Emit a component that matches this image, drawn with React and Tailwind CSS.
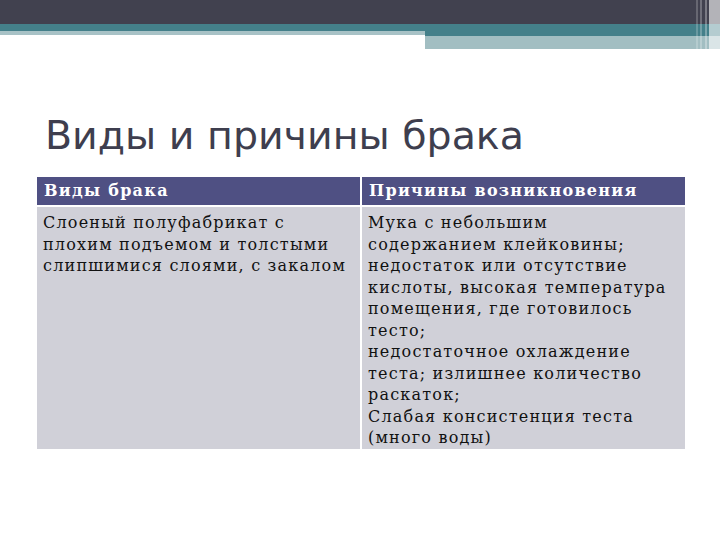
const causes = [
  "Мука с небольшим",
  "содержанием клейковины;",
  "недостаток или отсутствие",
  "кислоты, высокая температура",
  "помещения, где готовилось",
  "тесто;",
  "недостаточное охлаждение",
  "теста; излишнее количество",
  "раскаток;",
  "Слабая консистенция теста",
  "(много воды)",
];

const defects = [
  "Слоеный полуфабрикат с",
  "плохим подъемом и толстыми",
  "слипшимися слоями, с закалом",
];

export default function App() {
  return (
    <div className="relative w-[720px] h-[540px] bg-white overflow-hidden">
      {/* Top decoration */}
      <div className="flex flex-col">
        <div className="h-[24px] bg-[#41414f]" />
        <div className="flex">
          <div className="flex-1 flex flex-col">
            <div className="h-[7px] bg-[#44808a]" />
            <div className="h-[4px] bg-[#a8c2c6]" />
          </div>
          <div className="w-[295px] flex flex-col">
            <div className="h-[12px] bg-[#44808a]" />
            <div className="h-[13px] bg-[#a2bec2]" />
          </div>
        </div>
      </div>

      {/* right edge stripes */}
      <div className="absolute top-0 right-0 h-[49px] flex">
        <div className="w-[2px] bg-white/20" />
        <div className="w-[2px]" />
        <div className="w-[2px] bg-white/25" />
        <div className="w-[3px]" />
        <div className="w-[2px] bg-white/30" />
        <div className="w-[2px]" />
        <div className="w-[11px] bg-white/60" />
      </div>

      {/* Title */}
      <h1 className="mt-[62px] ml-[45px] text-[39.5px] leading-[48px] text-[#3e3e4e] font-['DejaVu_Sans',sans-serif]">
        Виды и причины брака
      </h1>

      {/* Table */}
      <div className="mt-[18px] ml-[37px] w-[648px] grid grid-cols-2 gap-[2px] bg-white font-['DejaVu_Serif',serif]">
        <div className="h-[28px] flex items-center px-[7px] bg-[#4f5083] text-white font-bold text-[16px] tracking-[1.3px]">
          Виды брака
        </div>
        <div className="h-[28px] flex items-center px-[7px] bg-[#4f5083] text-white font-bold text-[16px] tracking-[1.3px]">
          Причины возникновения
        </div>
        <div className="bg-[#d0d0d8] px-[6px] pt-[5px] text-[16px] tracking-[1.2px] leading-[21.5px] text-[#111]">
          {defects.map((l) => (
            <div key={l} className="whitespace-nowrap">{l}</div>
          ))}
        </div>
        <div className="bg-[#d0d0d8] px-[6px] pt-[5px] text-[16px] tracking-[1.2px] leading-[21.5px] text-[#111]">
          {causes.map((l) => (
            <div key={l} className="whitespace-nowrap">{l}</div>
          ))}
        </div>
      </div>
    </div>
  );
}
